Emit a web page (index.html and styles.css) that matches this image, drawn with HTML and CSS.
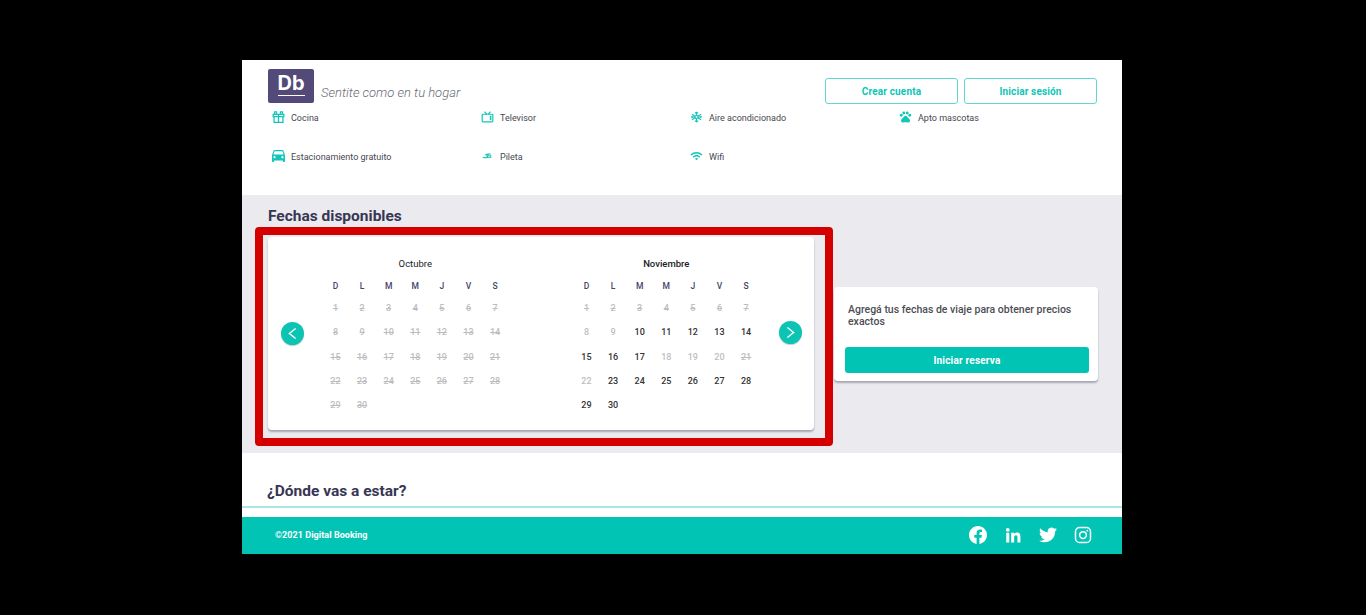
FILE: index.html
```html
<!DOCTYPE html>
<html lang="es">
	<head>
		<meta charset="utf-8" />
		<title>Digital Booking</title>
		<link rel="stylesheet" href="styles.css">
	</head>
	<body>
		<div class="page">
			<header class="header">
				<div class="brand-row">
					<div class="brand">
						<div class="logo"><span>Db</span></div>
						<span class="tagline">Sentite como en tu hogar</span>
					</div>
					<div class="actions">
						<a class="btn-outline">Crear cuenta</a>
						<a class="btn-outline">Iniciar sesión</a>
					</div>
				</div>
				<ul class="amenities">
					<li>
						<svg class="icon" viewBox="0 0 14 14" fill="none" stroke="currentColor" stroke-width="1.5"><path d="M1.8 6.5h10.4v6.7H1.8zM.8 4h12.4v2.5H.8zM7 4v9M4.8 4V1h-2.4v3M9.2 4V1h2.4v3"/></svg>
						Cocina
					</li>
					<li>
						<svg class="icon" viewBox="0 0 14 14" fill="none" stroke="currentColor" stroke-width="1.4"><rect x=".8" y="3.8" width="12.4" height="8.8" rx=".8"/><path d="M3.5 .8l2.6 3M10.5 .8l-2.6 3"/><path d="M10.6 5.5v5.2" stroke-width="1.8"/></svg>
						Televisor
					</li>
					<li>
						<svg class="icon" viewBox="0 0 14 14" fill="none" stroke="currentColor" stroke-width="1.3"><path d="M7 .8v12.4M1.6 3.9l10.8 6.2M12.4 3.9L1.6 10.1M5.2 1.6L7 3.2l1.8-1.6M5.2 12.4L7 10.8l1.8 1.6M1 6.2l2.4.8L1 7.8M13 6.2l-2.4.8 2.4.8"/><circle cx="7" cy="7" r="1.8" fill="#fff"/></svg>
						Aire acondicionado
					</li>
					<li>
						<svg class="icon" viewBox="1 2 22 21" fill="currentColor"><circle cx="4.5" cy="9.5" r="2.5"/><circle cx="9" cy="5.5" r="2.5"/><circle cx="15" cy="5.5" r="2.5"/><circle cx="19.5" cy="9.5" r="2.5"/><path d="M17.34 14.86c-.87-1.02-1.6-1.89-2.48-2.91-.46-.54-1.05-1.08-1.75-1.32-.11-.04-.22-.07-.33-.09-.25-.04-.52-.04-.78-.04s-.53 0-.79.05c-.11.02-.22.05-.33.09-.7.24-1.28.78-1.75 1.32-.87 1.02-1.6 1.89-2.48 2.91-1.31 1.31-2.92 2.76-2.62 4.79.29 1.02 1.02 2.03 2.33 2.32.73.15 3.06-.44 5.54-.44h.18c2.48 0 4.81.58 5.54.44 1.31-.29 2.04-1.31 2.33-2.32.31-2.04-1.3-3.49-2.61-4.8z"/></svg>
						Apto mascotas
					</li>
					<li>
						<svg class="icon" viewBox="3 5 18 16" preserveAspectRatio="none" fill="currentColor"><path d="M18.92 6.01C18.72 5.42 18.16 5 17.5 5h-11c-.66 0-1.21.42-1.42 1.01L3 12v8c0 .55.45 1 1 1h1c.55 0 1-.45 1-1v-1h12v1c0 .55.45 1 1 1h1c.55 0 1-.45 1-1v-8l-2.08-5.99zM6.5 16c-.83 0-1.5-.67-1.5-1.5S5.67 13 6.5 13s1.5.67 1.5 1.5S7.33 16 6.5 16zm11 0c-.83 0-1.5-.67-1.5-1.5s.67-1.5 1.5-1.5 1.5.67 1.5 1.5-.67 1.5-1.5 1.5zM5 11l1.5-4.5h11L19 11H5z"/></svg>
						Estacionamiento gratuito
					</li>
					<li>
						<svg class="icon" viewBox="0 0 14 14" fill="none" stroke="currentColor" stroke-width="1.4"><path d="M1.5 9c1.5-.7 2.5.2 4 0s3-1 6-.3M4.5 5.4l3.4 1-2 2.2M4.5 5.4l6-.9"/><circle cx="10.4" cy="6.8" r="1.1" fill="currentColor" stroke="none"/></svg>
						Pileta
					</li>
					<li>
						<svg class="icon" viewBox="0 3 24 18" fill="currentColor"><path d="M1 9l2 2c4.97-4.97 13.03-4.97 18 0l2-2C16.93 2.93 7.08 2.93 1 9zm8 8l3 3 3-3c-1.65-1.66-4.34-1.66-6 0zm-4-4l2 2c2.76-2.76 7.24-2.76 10 0l2-2C15.14 9.14 8.87 9.14 5 13z"/></svg>
						Wifi
					</li>
				</ul>
			</header>

			<section class="dates">
				<h2 class="title">Fechas disponibles</h2>
				<div class="dates-row">
					<div class="calendar-wrap">
						<div class="calendar">
							<button class="arrow arrow-prev" aria-label="Anterior">
								<svg viewBox="0 0 24 24" fill="none" stroke="#fff" stroke-width="2.2"><path d="M17 4L7 12l10 8"/></svg>
							</button>
							<div class="month month-first">
								<div class="month-name">Octubre</div>
								<div class="days">
									<b>D</b><b>L</b><b>M</b><b>M</b><b>J</b><b>V</b><b>S</b>
									<s>1</s><s>2</s><s>3</s><s>4</s><s>5</s><s>6</s><s>7</s>
									<s>8</s><s>9</s><s>10</s><s>11</s><s>12</s><s>13</s><s>14</s>
									<s>15</s><s>16</s><s>17</s><s>18</s><s>19</s><s>20</s><s>21</s>
									<s>22</s><s>23</s><s>24</s><s>25</s><s>26</s><s>27</s><s>28</s>
									<s>29</s><s>30</s>
								</div>
							</div>
							<div class="month">
								<div class="month-name month-name-strong">Noviembre</div>
								<div class="days">
									<b>D</b><b>L</b><b>M</b><b>M</b><b>J</b><b>V</b><b>S</b>
									<s>1</s><s>2</s><s>3</s><s>4</s><s>5</s><s>6</s><s>7</s>
									<i>8</i><i>9</i><span>10</span><span>11</span><span>12</span><span>13</span><span>14</span>
									<span>15</span><span>16</span><span>17</span><i>18</i><i>19</i><i>20</i><s>21</s>
									<i>22</i><span>23</span><span>24</span><span>25</span><span>26</span><span>27</span><span>28</span>
									<span>29</span><span>30</span>
								</div>
							</div>
							<button class="arrow arrow-next" aria-label="Siguiente">
								<svg viewBox="0 0 24 24" fill="none" stroke="#fff" stroke-width="2.2"><path d="M7 4l10 8-10 8"/></svg>
							</button>
						</div>
						<div class="highlight"></div>
					</div>
					<aside class="booking">
						<p>Agregá tus fechas de viaje para obtener precios exactos</p>
						<a class="btn-solid">Iniciar reserva</a>
					</aside>
				</div>
			</section>

			<section class="where">
				<h2 class="title">¿Dónde vas a estar?</h2>
			</section>

			<footer class="footer">
				<span class="copy">©2021 Digital Booking</span>
				<div class="social">
					<svg viewBox="0 0 24 24" fill="#fff"><path d="M24 12.073c0-6.627-5.373-12-12-12s-12 5.373-12 12c0 5.99 4.388 10.954 10.125 11.854v-8.385H7.078v-3.47h3.047V9.43c0-3.007 1.792-4.669 4.533-4.669 1.312 0 2.686.235 2.686.235v2.953H15.83c-1.491 0-1.956.925-1.956 1.874v2.25h3.328l-.532 3.47h-2.796v8.385C19.612 23.027 24 18.062 24 12.073z"/></svg>
					<svg viewBox="0 0 24 24" fill="#fff"><path d="M4.98 2.5a2.5 2.5 0 1 1 0 5 2.5 2.5 0 0 1 0-5zM3 9h4v13H3zM9.5 9h3.8v1.8h.05c.53-1 1.83-2.1 3.77-2.1 4.03 0 4.78 2.65 4.78 6.1V22h-4v-6.3c0-1.5-.02-3.4-2-3.4s-2.4 1.6-2.4 3.3V22h-4z"/></svg>
					<svg viewBox="0 0 24 24" fill="#fff"><path d="M23.953 4.57a10 10 0 01-2.825.775 4.958 4.958 0 002.163-2.723c-.951.555-2.005.959-3.127 1.184a4.92 4.92 0 00-8.384 4.482C7.69 8.095 4.067 6.13 1.64 3.162a4.822 4.822 0 00-.666 2.475c0 1.71.87 3.213 2.188 4.096a4.904 4.904 0 01-2.228-.616v.06a4.923 4.923 0 003.946 4.827 4.996 4.996 0 01-2.212.085 4.936 4.936 0 004.604 3.417 9.867 9.867 0 01-6.102 2.105c-.39 0-.779-.023-1.17-.067a13.995 13.995 0 007.557 2.209c9.053 0 13.998-7.496 13.998-13.985 0-.21 0-.42-.015-.63A9.935 9.935 0 0024 4.59z"/></svg>
					<svg viewBox="0 0 24 24" fill="none" stroke="#fff" stroke-width="2"><rect x="2" y="2" width="20" height="20" rx="5.5"/><circle cx="12" cy="12" r="4.5"/><circle cx="17.8" cy="6.2" r="1.2" fill="#fff" stroke="none"/></svg>
				</div>
			</footer>
		</div>
	</body>
</html>
```

FILE: styles.css
```css
* {
	padding: 0px;
	margin: 0px;
	box-sizing: border-box;
}

html, body {
	height: 100%;
}

body {
	background-color: #000;
	font-family: Roboto, "Liberation Sans", sans-serif;
	overflow: hidden;
}

.page {
	width: 880px;
	margin: 60px 0 0 242px;
	background-color: #fff;
}

/* header */
.header {
	height: 135px;
	padding: 9px 25px 0 26px;
}

.brand-row {
	display: flex;
	justify-content: space-between;
	height: 34px;
}

.brand {
	display: flex;
	align-items: flex-end;
}

.logo {
	width: 46px;
	height: 34px;
	background-color: #544a7a;
	border-radius: 2px;
	color: #fff;
	text-align: center;
}

.logo span {
	display: block;
	width: 27px;
	height: 27px;
	margin: 0 auto;
	padding-top: 3px;
	border-bottom: 1.5px solid #fff;
	font-family: Inter, Roboto, sans-serif;
	font-size: 20px;
	font-weight: 700;
	line-height: 22px;
}

.tagline {
	margin: 0 0 2px 7px;
	color: #6b6b76;
	font-size: 13px;
	font-style: italic;
	font-weight: 300;
	line-height: 16px;
}

.actions {
	display: flex;
	gap: 6px;
	padding-top: 9px;
}

.btn-outline {
	display: block;
	width: 133px;
	height: 26px;
	border: 1px solid #5fd8cf;
	border-radius: 3px;
	color: #0cc5b7;
	font-size: 10px;
	font-weight: 700;
	line-height: 25px;
	text-align: center;
	letter-spacing: .15px;
}

.amenities {
	display: grid;
	grid-template-columns: repeat(4, 209px);
	grid-auto-rows: 20px;
	row-gap: 19px;
	margin: 5px 0 0 4px;
	list-style: none;
	color: #47474f;
	font-size: 9px;
}

.amenities li {
	display: flex;
	align-items: center;
	gap: 6px;
}

.icon {
	width: 13px;
	height: 12px;
	margin-top: -2px;
	color: #12c6b8;
}

/* fechas */
.dates {
	height: 258px;
	padding: 11px 24px 0 26px;
	background-color: #ebebef;
}

.title {
	color: #383654;
	font-size: 15.5px;
	font-weight: 700;
	line-height: 20px;
}

.dates-row {
	display: flex;
	align-items: center;
	gap: 20px;
	margin-top: 11px;
}

.calendar-wrap {
	position: relative;
	width: 546px;
}

.calendar {
	display: flex;
	align-items: center;
	height: 193px;
	padding: 0 12.5px;
	background-color: #fff;
	border-radius: 4px;
	box-shadow: 0 2px 2px rgba(40, 40, 60, .35);
}

.highlight {
	position: absolute;
	top: -10px;
	left: -13px;
	right: -19px;
	bottom: -16px;
	border: 8px solid #d40000;
	border-radius: 4px;
	pointer-events: none;
}

.arrow {
	flex: none;
	display: flex;
	align-items: center;
	justify-content: center;
	width: 23px;
	height: 23px;
	background-color: #0cc4b4;
	border: none;
	border-radius: 50%;
	box-shadow: 0 1px 1px rgba(0, 0, 0, .2);
}

.arrow svg {
	width: 15px;
	height: 15px;
}

.arrow-prev {
	margin: 0 18.7px 0 0;
}

.arrow-next {
	margin: -3px 0 0 19.5px;
}

.month {
	flex: none;
	align-self: flex-start;
	width: 186.2px;
	padding-top: 19.5px;
}

.month-first {
	margin-right: 64.8px;
}

.month-name {
	height: 14px;
	margin-bottom: 5.5px;
	color: #222;
	font-size: 9.5px;
	line-height: 14px;
	text-align: center;
}

.month-name-strong {
	font-weight: 500;
}

.days {
	display: grid;
	grid-template-columns: repeat(7, 1fr);
	grid-template-rows: 20px;
	grid-auto-rows: 24.25px;
	align-items: center;
	justify-items: center;
	color: #222;
	font-size: 9px;
}

.days span {
	font-weight: 500;
	color: #333;
}

.days b {
	color: #45436a;
	font-size: 8.5px;
	font-weight: 500;
}

.days i,
.days s {
	color: #bdbdc1;
	font-style: normal;
	font-weight: 500;
}

/* reserva */
.booking {
	width: 264px;
	height: 94px;
	padding: 17px 9px 0 11px;
	background-color: #fff;
	border-radius: 4px;
	box-shadow: 0 2px 2px rgba(40, 40, 60, .35);
}

.booking p {
	height: 43px;
	padding-left: 3px;
	color: #4d4d55;
	font-size: 10.5px;
	font-weight: 500;
	line-height: 12.5px;
}

.btn-solid {
	display: block;
	height: 26px;
	background-color: #02c4b5;
	border-radius: 3px;
	color: #fff;
	font-size: 10px;
	font-weight: 700;
	line-height: 27px;
	text-align: center;
	letter-spacing: .2px;
}

/* donde */
.where {
	height: 64px;
	padding-top: 28px;
}

.where .title {
	height: 27px;
	padding-left: 25px;
	border-bottom: 2px solid #a8e8e3;
}

/* footer */
.footer {
	display: flex;
	align-items: center;
	justify-content: space-between;
	height: 37px;
	padding: 0 30px 2px 33px;
	background-color: #02c4b5;
	color: #fff;
}

.copy {
	font-size: 9px;
	font-weight: 700;
	letter-spacing: .05px;
}

.social {
	display: flex;
	gap: 17px;
}

.social svg {
	width: 18px;
	height: 18px;
}
```
